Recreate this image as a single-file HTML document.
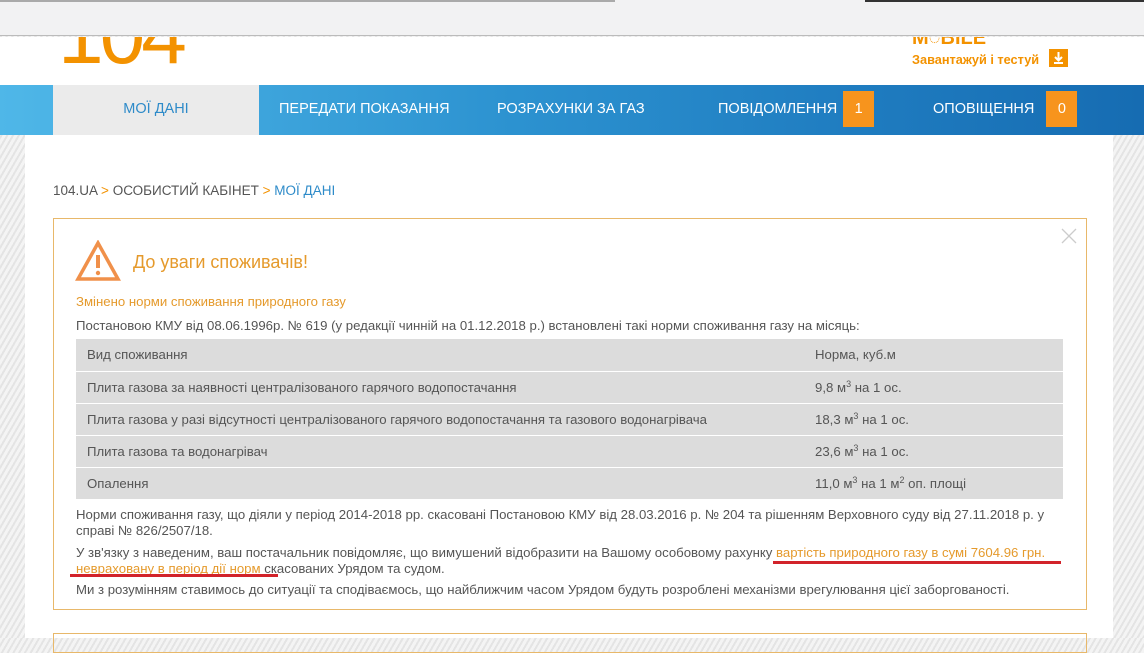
<!DOCTYPE html>
<html><head><meta charset="utf-8"><style>
*{margin:0;padding:0;box-sizing:border-box}
body{width:1144px;height:638px;overflow:hidden;font-family:"Liberation Sans",sans-serif;background:#ececec;position:relative;
background-image:repeating-linear-gradient(120deg,#f4f4f4 0 3px,#e4e4e4 3px 5px)}
.top{position:absolute;left:0;top:0;width:1144px;height:36px;background:#f2f2f3;border-bottom:1px solid #bbb}
.top:before{content:"";position:absolute;left:0;top:0;width:615px;height:2px;background:#aaa}
.top:after{content:"";position:absolute;left:865px;top:0;width:279px;height:2px;background:#333}
.hdr{position:absolute;left:0;top:37px;width:1144px;height:48px;background:#fff;overflow:hidden}
.logo{position:absolute;left:58px;top:-42px;font-size:82px;color:#f39200;letter-spacing:-4px;line-height:1}
.mob{position:absolute;left:912px;top:-10px;color:#f39200;font-size:20px;font-weight:bold}
.dl{position:absolute;left:912px;top:15px;color:#f39200;font-size:13px;font-weight:bold;transform:scaleX(.98);transform-origin:0 0}
.dlb{position:absolute;left:1049px;top:12px;width:19px;height:18px;background:#f39200}
.nav{position:absolute;left:0;top:85px;width:1144px;height:50px;background:linear-gradient(90deg,#4fb7e8,#2c92d0 45%,#1f7cc0 75%,#166cb2)}
.nav div{position:absolute;top:0;height:50px;line-height:48px;color:#fff;font-size:14.5px}
.nav .act{left:53px;width:206px;background:#ebebeb;color:#2e8bc9;text-align:center}
.badge{display:inline-block;background:#f7941d;width:31px;height:36px;line-height:36px;text-align:center;margin-left:6px;vertical-align:middle}
.page{position:absolute;left:25px;top:135px;width:1088px;height:503px;background:#fff}
.bc{position:absolute;left:53px;top:183px;font-size:13.5px;color:#555}
.bc span{color:#f39200}.bc b{font-weight:normal;color:#2e8bc9}
.box{position:absolute;left:53px;top:218px;width:1034px;height:392px;border:1px solid #e8b86a}
.box2{position:absolute;left:53px;top:633px;width:1034px;height:20px;border:1px solid #e8b86a}
.t{position:absolute;color:#555;font-size:13.2px;white-space:nowrap}
.n{line-height:16px}
.o{color:#e59a2c}
table{position:absolute;left:76px;top:339px;width:987px;border-collapse:collapse;font-size:13.2px;color:#555}
td{background:#dcdcdc;height:32px;border-bottom:1px solid #fff;padding-left:11px}
td+td{width:248px;padding-left:0}
sup{font-size:9px;vertical-align:5px;line-height:0}
.ul{position:absolute;height:3px;background:#d2232a}
</style></head><body>
<div class="top"></div>
<div class="hdr"><div class="logo">104</div><div class="mob">M◌BILE</div><div class="dl">Завантажуй і тестуй</div><div class="dlb"><svg width="19" height="18"><path d="M9.5 3v8M6 8l3.5 3.5L13 8M5 14h9" stroke="#fff" stroke-width="2" fill="none"/></svg></div></div>
<div class="nav">
<div class="act">МОЇ ДАНІ</div>
<div style="left:279px">ПЕРЕДАТИ ПОКАЗАННЯ</div>
<div style="left:497px">РОЗРАХУНКИ ЗА ГАЗ</div>
<div style="left:718px">ПОВІДОМЛЕННЯ<span class="badge">1</span></div>
<div style="left:933px">ОПОВІЩЕННЯ<span class="badge" style="margin-left:12px">0</span></div>
</div>
<div class="page"></div>
<div class="bc">104.UA <span>&gt;</span> ОСОБИСТИЙ КАБІНЕТ <span>&gt;</span> <b>МОЇ ДАНІ</b></div>
<div class="box"></div><div class="box2"></div>
<svg style="position:absolute;left:1061px;top:228px" width="16" height="16"><path d="M1 1L15 15M15 1L1 15" stroke="#ccc" stroke-width="1.3"/></svg>
<svg style="position:absolute;left:75px;top:240px" width="46" height="42"><path d="M23 3L3 39H43Z" stroke="#f0904a" stroke-width="3.5" fill="none"/><path d="M23 15v13" stroke="#f0904a" stroke-width="4"/><circle cx="23" cy="33" r="2.2" fill="#f0904a"/></svg>
<div class="t o" style="left:133px;top:252px;font-size:18px">До уваги споживачів!</div>
<div class="t o" style="left:76px;top:294px">Змінено норми споживання природного газу</div>
<div class="t" style="left:76px;top:318px">Постановою КМУ від 08.06.1996р. № 619 (у редакції чинній на 01.12.2018 р.) встановлені такі норми споживання газу на місяць:</div>
<table>
<tr><td>Вид споживання</td><td>Норма, куб.м</td></tr>
<tr><td>Плита газова за наявності централізованого гарячого водопостачання</td><td>9,8 м<sup>3</sup> на 1 ос.</td></tr>
<tr><td>Плита газова у разі відсутності централізованого гарячого водопостачання та газового водонагрівача</td><td>18,3 м<sup>3</sup> на 1 ос.</td></tr>
<tr><td>Плита газова та водонагрівач</td><td>23,6 м<sup>3</sup> на 1 ос.</td></tr>
<tr><td>Опалення</td><td>11,0 м<sup>3</sup> на 1 м<sup>2</sup> оп. площі</td></tr>
</table>
<div class="t n" style="left:76px;top:507px">Норми споживання газу, що діяли у період 2014-2018 рр. скасовані Постановою КМУ від 28.03.2016 р. № 204 та рішенням Верховного суду від 27.11.2018 р. у<br>справі № 826/2507/18.</div>
<div class="t n" style="left:76px;top:545px">У зв'язку з наведеним, ваш постачальник повідомляє, що вимушений відобразити на Вашому особовому рахунку <span class="o">вартість природного газу в сумі 7604.96 грн.</span><br><span class="o">невраховану в період дії норм</span> скасованих Урядом та судом.</div>
<div class="ul" style="left:773px;top:561px;width:288px"></div>
<div class="ul" style="left:70px;top:574px;width:208px"></div>
<div class="t n" style="left:76px;top:582px">Ми з розумінням ставимось до ситуації та сподіваємось, що найближчим часом Урядом будуть розроблені механізми врегулювання цієї заборгованості.</div>
</body></html>
